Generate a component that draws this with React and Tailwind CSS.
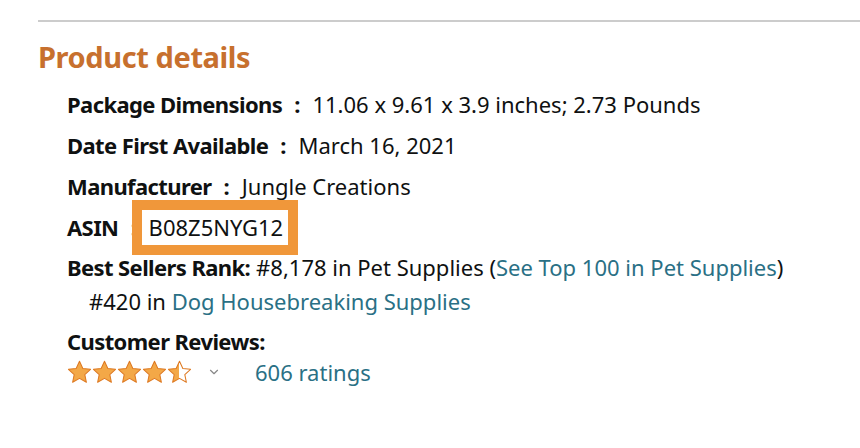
import { ChevronDown } from 'lucide-react';

const font = { fontFamily: '"Noto Sans", "Open Sans", Arial, sans-serif' };

function Star({ fill = 1 }) {
  const id = `half-${fill}`;
  return (
    <svg width="25" height="24" viewBox="0 0 24 23">
      <defs>
        <linearGradient id={id}>
          <stop offset={fill} stopColor="#f3a847" />
          <stop offset={fill} stopColor="#ffffff" />
        </linearGradient>
      </defs>
      <path
        d="M12 1.2l3.2 6.9 7.4.8-5.5 5.1 1.5 7.4L12 17.6l-6.6 3.8 1.5-7.4L1.4 8.9l7.4-.8z"
        fill={`url(#${id})`}
        stroke="#de7921"
        strokeWidth="1"
        strokeLinejoin="round"
      />
    </svg>
  );
}

function Row({ label, children }) {
  return (
    <div className="flex items-center h-[41px] text-[22px] text-[#0f1111]">
      <span className="font-bold tracking-[-0.6px]">{label}</span>
      <span className="font-bold mx-[12px]">:</span>
      <span>{children}</span>
    </div>
  );
}

export default function App() {
  return (
    <div className="w-[860px] h-[448px] bg-white pt-[20px] pl-[38px]" style={font}>
      <div className="h-[2px] bg-[#cccccc]" />
      <h2 className="mt-[18px] text-[29px] font-bold tracking-[-0.4px] text-[#c7702e] leading-[34px]">Product details</h2>
      <div className="pl-[29px] mt-[10px]">
        <Row label="Package Dimensions">11.06 x 9.61 x 3.9 inches; 2.73 Pounds</Row>
        <Row label="Date First Available">March 16, 2021</Row>
        <Row label="Manufacturer">Jungle Creations</Row>
        <div className="flex items-center h-[41px] text-[22px] text-[#0f1111]">
          <span className="font-bold tracking-[-0.6px]">ASIN</span>
          <span className="font-bold mx-[12px] text-[#999]">:</span>
          <span className="relative z-10 shrink-0 border-[10px] border-[#f0973a] bg-white pl-[7px] pr-[5px] h-[55px] flex items-center -ml-[17px]">
            B08Z5NYG12
          </span>
        </div>
        <div className="h-[39px] flex items-center text-[22px] text-[#0f1111]">
          <span className="font-bold tracking-[-0.6px]">Best Sellers Rank:</span>
          <span className="ml-[6px]">
            #8,178 in Pet Supplies (<a className="text-[#2a7085]">See Top 100 in Pet Supplies</a>)
          </span>
        </div>
        <div className="h-[28px] flex items-center pl-[22px] text-[22px] text-[#0f1111]">
          #420 in&nbsp;<a className="text-[#2a7085]">Dog Housebreaking Supplies</a>
        </div>
        <div className="mt-[11px] text-[22px] font-bold tracking-[-0.6px] text-[#0f1111] leading-[30px]">Customer Reviews:</div>
        <div className="flex items-center h-[32px]">
          <div className="flex">
            <Star />
            <Star />
            <Star />
            <Star />
            <Star fill={0.5} />
          </div>
          <ChevronDown className="ml-[15px] w-[14px] h-[14px] text-[#888]" strokeWidth={2} />
          <a className="ml-[34px] text-[22px] text-[#2a7085]">606 ratings</a>
        </div>
      </div>
    </div>
  );
}
